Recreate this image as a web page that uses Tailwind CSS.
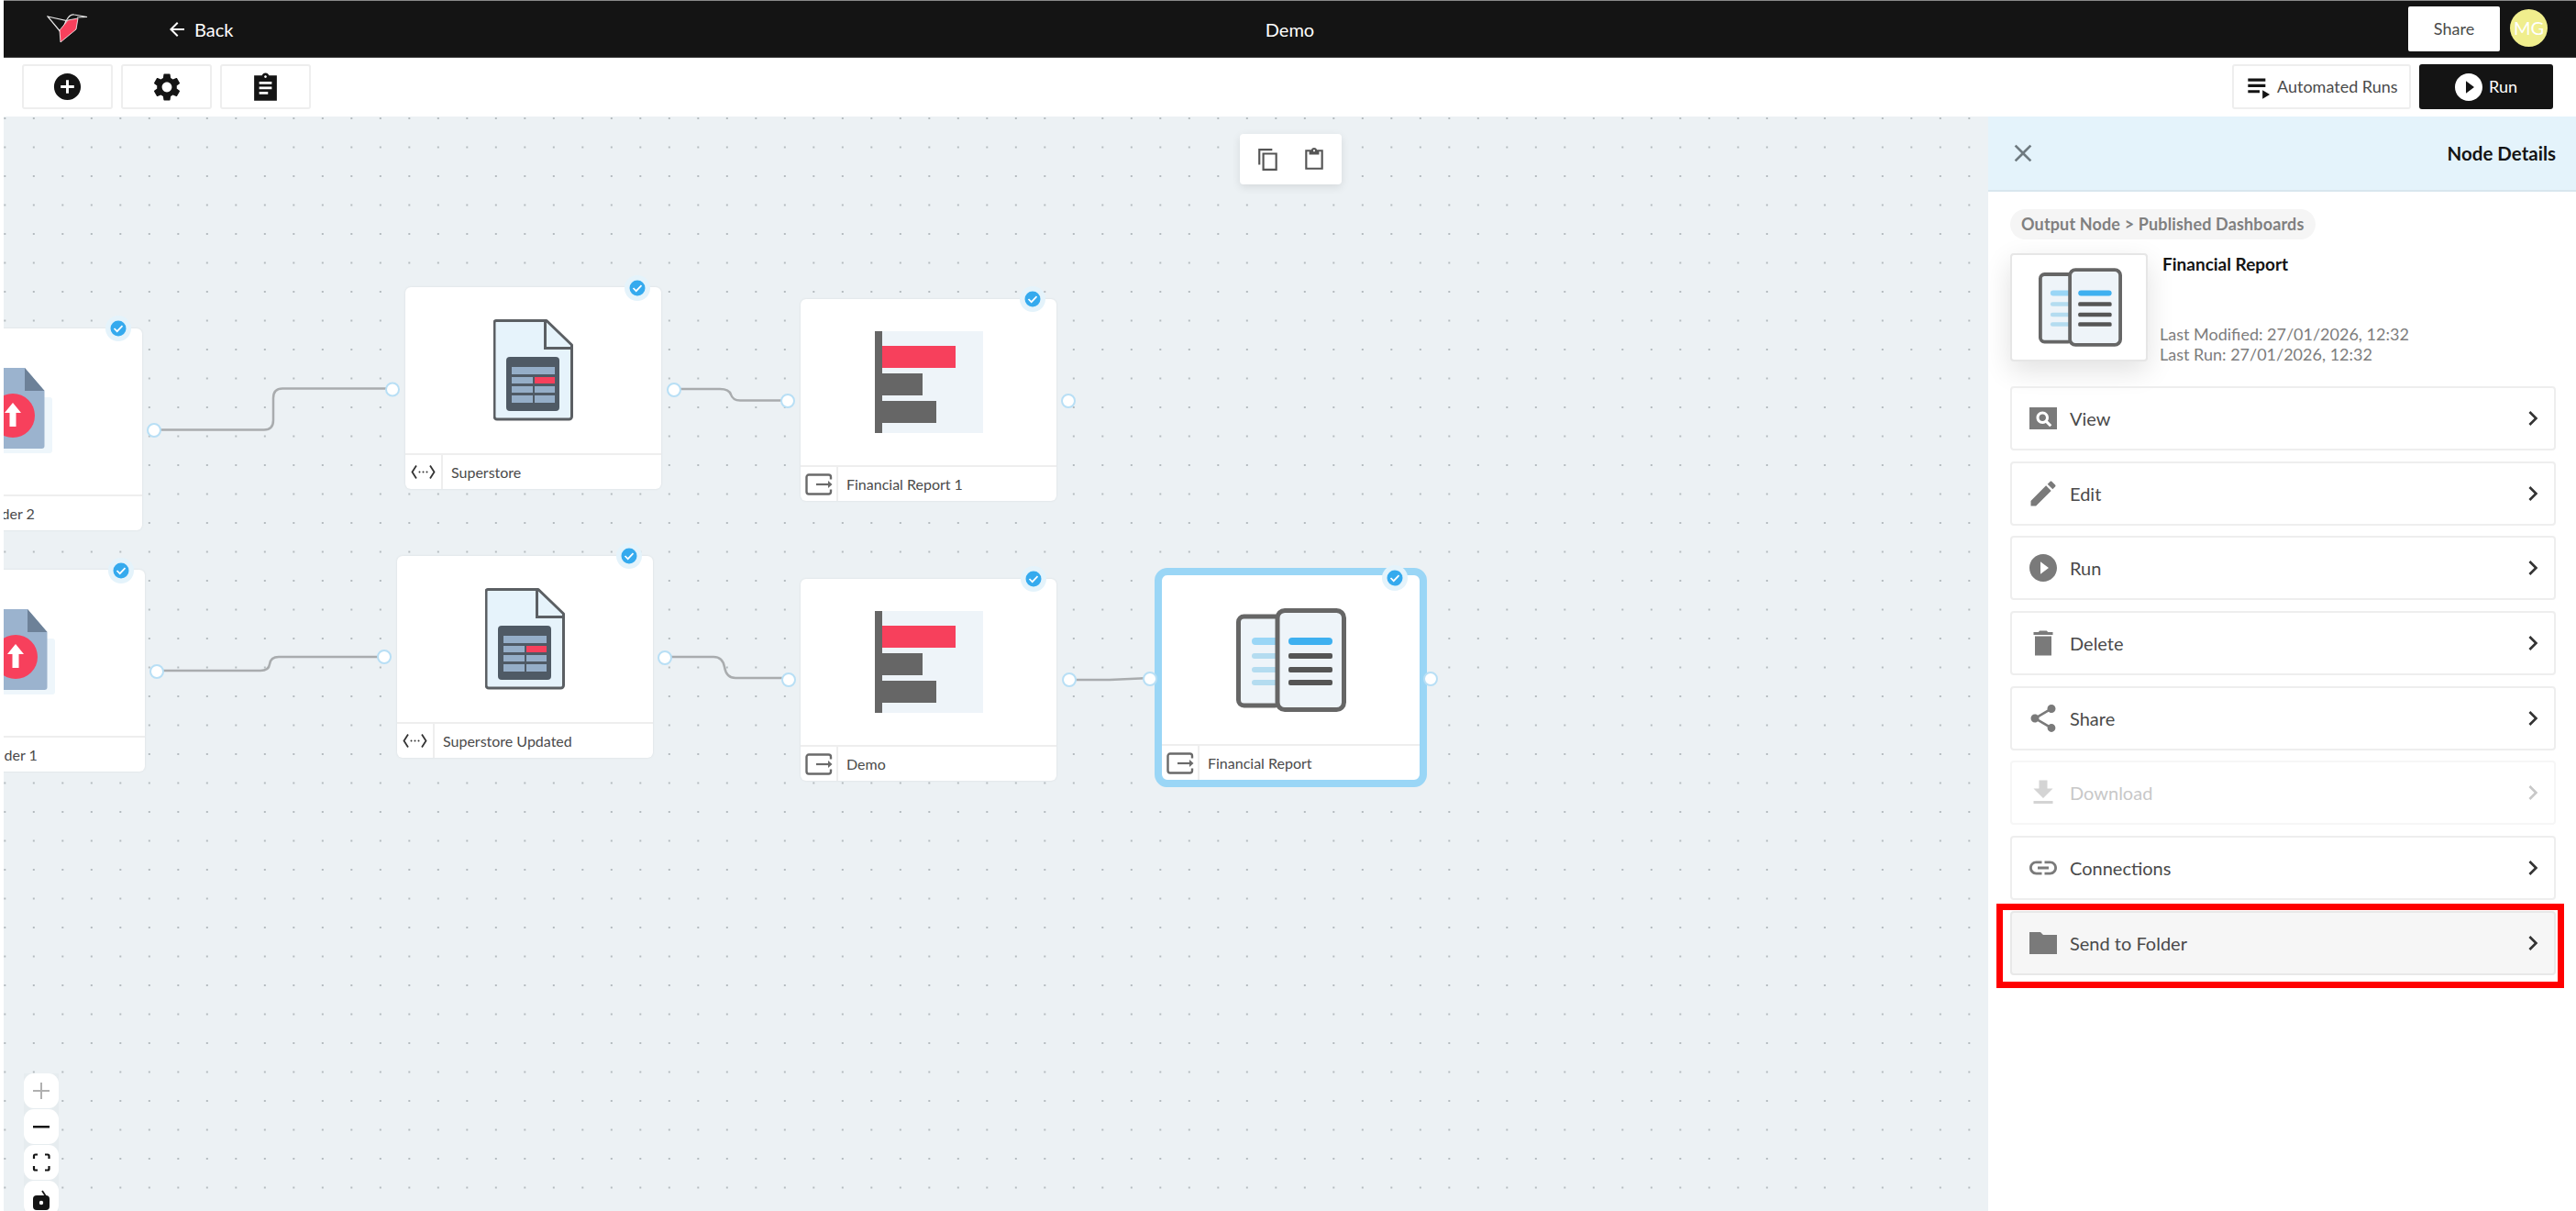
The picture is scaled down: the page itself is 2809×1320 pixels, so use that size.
<!DOCTYPE html>
<html lang="en">
<head>
<meta charset="utf-8">
<title>Demo</title>
<script src="https://cdn.jsdelivr.net/npm/@tailwindcss/browser@4"></script>
</head>
<body class="m-0 bg-white">
<svg width="0" height="0" class="absolute">
  <defs>
    <symbol id="doc" viewBox="0 0 87 111">
      <path d="M3 1.5H58L85.5 28V106a3 3 0 0 1-3 3H4a3 3 0 0 1-3-3V3.5a2 2 0 0 1 2-2z" fill="#e6f3fb" stroke="#5b5f63" stroke-width="3" stroke-linejoin="round"/>
      <path d="M56.5 2V31.5H85.5" fill="none" stroke="#5b5f63" stroke-width="3"/>
      <rect x="14" y="41" width="58" height="59" rx="4" fill="#4f5a65"/>
      <rect x="20" y="52" width="47" height="8" fill="#95aec8"/>
      <rect x="20" y="63" width="23" height="7" fill="#95aec8"/><rect x="45" y="63" width="22" height="7" fill="#f7405c"/>
      <rect x="20" y="73" width="23" height="7" fill="#95aec8"/><rect x="45" y="73" width="22" height="7" fill="#95aec8"/>
      <rect x="20" y="83" width="23" height="8" fill="#95aec8"/><rect x="45" y="83" width="22" height="8" fill="#95aec8"/>
    </symbol>
    <symbol id="bars" viewBox="0 0 118 111">
      <rect x="0" y="0" width="118" height="111" fill="#eef4f9"/>
      <rect x="0" y="0" width="8" height="112" fill="#666666"/>
      <rect x="8" y="16" width="80" height="24" fill="#f7405c"/>
      <rect x="8" y="46" width="44" height="24" fill="#666666"/>
      <rect x="8" y="76" width="59" height="24" fill="#666666"/>
    </symbol>
    <symbol id="report" viewBox="0 0 120 113">
      <rect x="2.5" y="9" width="46" height="97" rx="6" fill="#eef4f9" stroke="#666666" stroke-width="5"/>
      <rect x="17" y="32" width="30" height="8" rx="4" fill="#9ad6f6"/>
      <rect x="17" y="49" width="30" height="6" rx="3" fill="#b4dcf0"/>
      <rect x="17" y="64" width="30" height="6" rx="3" fill="#b4dcf0"/>
      <rect x="17" y="78" width="30" height="6" rx="3" fill="#b4dcf0"/>
      <rect x="45" y="2.5" width="72.5" height="108" rx="8" fill="#eef4f9" stroke="#666666" stroke-width="5"/>
      <rect x="57" y="32" width="48" height="8" rx="4" fill="#3eb0f0"/>
      <rect x="57" y="49" width="48" height="6" rx="2" fill="#555555"/>
      <rect x="57" y="64" width="48" height="6" rx="2" fill="#555555"/>
      <rect x="57" y="78" width="48" height="6" rx="2" fill="#555555"/>
    </symbol>
    <symbol id="upload" viewBox="0 0 83 93">
      <rect x="20" y="32" width="63" height="61" rx="3" fill="#eef6fb"/>
      <path d="M11 0H53L74.5 25V85a3 3 0 0 1-3 3H11a3 3 0 0 1-3-3V3a3 3 0 0 1 3-3z" fill="#9bb3ce"/>
      <path d="M53 0L74.5 25H53z" fill="#6d8198"/>
      <circle cx="40" cy="52" r="24" fill="#f7405c"/>
      <path d="M40 38L49 49H43.500V64H36.500V49H31z" fill="#ffffff"/>
    </symbol>
    <symbol id="api" viewBox="0 0 27 17">
      <path d="M6 1.500L1.500 8.500L6 15.500M21 1.500L25.500 8.500L21 15.500" fill="none" stroke="#333333" stroke-width="1.800"/>
      <circle cx="9.500" cy="8.500" r="1" fill="#333333"/><circle cx="13.500" cy="8.500" r="1" fill="#333333"/><circle cx="17.500" cy="8.500" r="1" fill="#333333"/>
    </symbol>
    <symbol id="output" viewBox="0 0 30 24">
      <path d="M28 6.500V4a2.500 2.500 0 0 0-2.500-2.500H4A2.500 2.500 0 0 0 1.500 4V20A2.500 2.500 0 0 0 4 22.500H25.500A2.500 2.500 0 0 0 28 20V17.500" fill="none" stroke="#6a6a6a" stroke-width="2.400"/>
      <path d="M12 12H26" stroke="#6a6a6a" stroke-width="2.200"/>
      <path d="M25 8L29.500 12L25 16z" fill="#6a6a6a"/>
    </symbol>
    <symbol id="badge" viewBox="-14 -14 28 28">
      <circle r="14" fill="#e4f3fb"/>
      <circle r="8.500" fill="#35aaee"/>
      <path d="M-4.500 0L-1.300 3.200L4.500 -2.800" fill="none" stroke="#ffffff" stroke-width="1.700"/>
    </symbol>
    <symbol id="chev" viewBox="0 0 24 24"><path d="M8.590 16.590L13.170 12 8.590 7.410 10 6l6 6-6 6z"/></symbol>
    <symbol id="playc" viewBox="0 0 24 24"><path d="M12 2C6.480 2 2 6.480 2 12s4.480 10 10 10 10-4.480 10-10S17.520 2 12 2zm-2 14.500v-9l6 4.500-6 4.500z"/></symbol>
  </defs>
</svg>

<div class="relative w-[2809px] h-[1320px] overflow-hidden flex flex-col font-[Lato,sans-serif] text-[#4a4a4a] bg-white">
  <!-- top bar -->
  <header class="ml-[4px] h-[63px] shrink-0 bg-[#141414] border-t border-t-[#8a8a8a] border-b border-b-[#3a3a3a] grid grid-cols-[1fr_auto_1fr] items-center text-white">
    <div class="flex items-center">
      <svg class="ml-[47px] w-[45px] h-[35px] -mt-[2px]" viewBox="51 13 45 35">
        <path d="M52 18L72 22.500L67 36L52 18z" fill="none" stroke="#e8e8e8" stroke-width="1.200"/>
        <path d="M74 22L85 20L83 32L66 46L65 33z" fill="#f7405c" stroke="#ffffff" stroke-width="0.800"/>
        <path d="M72 23C74 19 77 15 81 16L95 18.500L84 19" fill="none" stroke="#e8e8e8" stroke-width="1.200"/>
      </svg>
      <svg class="ml-[85px] w-[24px] h-[24px]" viewBox="0 0 24 24" fill="#ffffff"><path d="M20 11H7.830l5.590-5.590L12 4l-8 8 8 8 1.410-1.410L7.830 13H20v-2z"/></svg>
      <span class="ml-[7px] text-[20px] leading-6">Back</span>
    </div>
    <div class="text-[20px] leading-6">Demo</div>
    <div class="flex items-center justify-end pr-[31px] gap-[11px]">
      <button class="w-[100px] h-[49px] bg-white rounded-[2px] text-[18px] text-[#4a4a4a]">Share</button>
      <div class="w-[41px] h-[41px] rounded-full bg-[#f0ee8d] flex items-center justify-center text-[20px] text-white -mt-[3px]">MG</div>
    </div>
  </header>

  <!-- toolbar -->
  <div class="h-[64px] shrink-0 flex items-start justify-between pt-[7px] pl-[24px] pr-[25px]">
    <div class="flex gap-[9px]">
      <button class="w-[99px] h-[49px] border-2 border-[#eeeeee] rounded-[3px] flex items-center justify-center">
        <svg class="w-[35px] h-[35px]" viewBox="0 0 24 24" fill="#141414"><path d="M12 2C6.480 2 2 6.480 2 12s4.480 10 10 10 10-4.480 10-10S17.520 2 12 2zm5 11h-4v4h-2v-4H7v-2h4V7h2v4h4v2z"/></svg>
      </button>
      <button class="w-[99px] h-[49px] border-2 border-[#eeeeee] rounded-[3px] flex items-center justify-center">
        <svg class="w-[36px] h-[36px]" viewBox="0 0 24 24" fill="#141414"><path d="M19.140 12.940c.04-.3.06-.61.06-.94 0-.32-.02-.64-.07-.94l2.030-1.580c.18-.14.23-.41.12-.61l-1.920-3.320c-.12-.22-.37-.29-.59-.22l-2.390.96c-.5-.38-1.030-.7-1.620-.94l-.36-2.540c-.04-.24-.24-.41-.48-.41h-3.840c-.24 0-.43.17-.47.41l-.36 2.540c-.59.24-1.130.57-1.620.94l-2.390-.96c-.22-.08-.47 0-.59.22L2.740 8.870c-.12.21-.08.47.12.61l2.030 1.580c-.05.3-.09.63-.09.94s.02.64.07.94l-2.030 1.580c-.18.14-.23.41-.12.61l1.920 3.320c.12.22.37.29.59.22l2.390-.96c.5.38 1.030.7 1.620.94l.36 2.540c.05.24.24.41.48.41h3.840c.24 0 .44-.17.47-.41l.36-2.540c.59-.24 1.130-.56 1.620-.94l2.390.96c.22.08.47 0 .59-.22l1.920-3.320c.12-.22.07-.47-.12-.61l-2.010-1.580zM12 15.600c-1.980 0-3.600-1.620-3.600-3.600s1.620-3.600 3.600-3.600 3.600 1.620 3.600 3.600-1.620 3.600-3.600 3.600z"/></svg>
      </button>
      <button class="w-[99px] h-[49px] border-2 border-[#eeeeee] rounded-[3px] flex items-center justify-center">
        <svg class="w-[33px] h-[33px]" viewBox="0 0 24 24" fill="#141414"><path d="M21 3h-6.180C14.400 1.840 13.300 1 12 1c-1.300 0-2.400.84-2.820 2H3v20h18V3zm-9 0c.55 0 1 .45 1 1s-.45 1-1 1-1-.45-1-1 .45-1 1-1zm2 15H7v-2h7v2zm3-4H7v-2h10v2zm0-4H7V8h10v2z"/></svg>
      </button>
    </div>
    <div class="flex gap-[9px]">
      <button class="w-[195px] h-[49px] border-2 border-[#eeeeee] rounded-[3px] flex items-center pl-[9px] text-[18px]">
        <svg class="w-[38px] h-[38px]" viewBox="0 0 24 24" fill="#141414"><path d="M4 10h12v2H4zm0-4h12v2H4zm0 8h8v2H4zm10 0v6l5-3z"/></svg>
        <span class="whitespace-nowrap">Automated Runs</span>
      </button>
      <button class="w-[146px] h-[49px] bg-[#141414] rounded-[3px] flex items-center pl-[36px] text-white text-[18px]">
        <svg class="w-[36px] h-[36px] fill-white"><use href="#playc"/></svg>
        <span class="ml-[4px]">Run</span>
      </button>
    </div>
  </div>

  <div class="flex-1 flex min-h-0 pl-[4px]">
    <!-- canvas -->
    <main class="relative flex-1 overflow-hidden bg-[#ecf1f4] bg-[radial-gradient(circle,#b4bbbf_1px,transparent_1.200px)] bg-[size:31.500px_31.500px] bg-[position:-14.450px_-13.750px]">
      <!-- nodes -->
      <section class="absolute left-[-128px] top-[231px] w-[279px] h-[220px] bg-white rounded-[6px] flex flex-col shadow-[0_0_3px_rgba(0,0,0,0.08)]">
        <div class="flex-1 flex items-center justify-center"><svg class="w-[83px] h-[93px] -mt-[3px]"><use href="#upload"/></svg></div>
        <div class="h-[39px] border-t-2 border-[#eeeeee] flex items-center text-[16px]">
          <div class="w-[41px] h-full border-r-2 border-[#eeeeee]"></div><span class="ml-[9px] whitespace-nowrap">Upload Folder 2</span>
        </div>
      </section>
      <section class="absolute left-[438px] top-[186px] w-[279px] h-[220px] bg-white rounded-[6px] flex flex-col shadow-[0_0_3px_rgba(0,0,0,0.08)]">
        <div class="flex-1 flex items-center justify-center"><svg class="w-[87px] h-[111px]"><use href="#doc"/></svg></div>
        <div class="h-[39px] border-t-2 border-[#eeeeee] flex items-center text-[16px]">
          <div class="w-[41px] h-full border-r-2 border-[#eeeeee] flex items-center justify-center"><svg class="w-[27px] h-[17px]"><use href="#api"/></svg></div><span class="ml-[9px]">Superstore</span>
        </div>
      </section>
      <section class="absolute left-[869px] top-[199px] w-[279px] h-[220px] bg-white rounded-[6px] flex flex-col shadow-[0_0_3px_rgba(0,0,0,0.08)]">
        <div class="flex-1 flex items-center justify-center"><svg class="w-[118px] h-[111px]"><use href="#bars"/></svg></div>
        <div class="h-[39px] border-t-2 border-[#eeeeee] flex items-center text-[16px]">
          <div class="w-[41px] h-full border-r-2 border-[#eeeeee] flex items-center justify-center"><svg class="w-[30px] h-[24px]"><use href="#output"/></svg></div><span class="ml-[9px]">Financial Report 1</span>
        </div>
      </section>
      <section class="absolute left-[-125px] top-[494px] w-[279px] h-[220px] bg-white rounded-[6px] flex flex-col shadow-[0_0_3px_rgba(0,0,0,0.08)]">
        <div class="flex-1 flex items-center justify-center"><svg class="w-[83px] h-[93px] -mt-[3px]"><use href="#upload"/></svg></div>
        <div class="h-[39px] border-t-2 border-[#eeeeee] flex items-center text-[16px]">
          <div class="w-[41px] h-full border-r-2 border-[#eeeeee]"></div><span class="ml-[9px] whitespace-nowrap">Upload Folder 1</span>
        </div>
      </section>
      <section class="absolute left-[429px] top-[479px] w-[279px] h-[220px] bg-white rounded-[6px] flex flex-col shadow-[0_0_3px_rgba(0,0,0,0.08)]">
        <div class="flex-1 flex items-center justify-center"><svg class="w-[87px] h-[111px]"><use href="#doc"/></svg></div>
        <div class="h-[39px] border-t-2 border-[#eeeeee] flex items-center text-[16px]">
          <div class="w-[41px] h-full border-r-2 border-[#eeeeee] flex items-center justify-center"><svg class="w-[27px] h-[17px]"><use href="#api"/></svg></div><span class="ml-[9px]">Superstore Updated</span>
        </div>
      </section>
      <section class="absolute left-[869px] top-[504px] w-[279px] h-[220px] bg-white rounded-[6px] flex flex-col shadow-[0_0_3px_rgba(0,0,0,0.08)]">
        <div class="flex-1 flex items-center justify-center"><svg class="w-[118px] h-[111px]"><use href="#bars"/></svg></div>
        <div class="h-[39px] border-t-2 border-[#eeeeee] flex items-center text-[16px]">
          <div class="w-[41px] h-full border-r-2 border-[#eeeeee] flex items-center justify-center"><svg class="w-[30px] h-[24px]"><use href="#output"/></svg></div><span class="ml-[9px]">Demo</span>
        </div>
      </section>
      <section class="absolute left-[1255px] top-[492px] w-[297px] h-[239px] bg-white border-[8px] border-[#9ad6f6] rounded-[14px] flex flex-col">
        <div class="flex-1 flex items-center justify-center"><svg class="w-[120px] h-[113px]"><use href="#report"/></svg></div>
        <div class="h-[39px] border-t-2 border-[#eeeeee] flex items-center text-[16px]">
          <div class="w-[41px] h-full border-r-2 border-[#eeeeee] flex items-center justify-center"><svg class="w-[30px] h-[24px]"><use href="#output"/></svg></div><span class="ml-[9px]">Financial Report</span>
        </div>
      </section>

      <!-- connectors, ports and status badges -->
      <svg class="absolute left-0 top-0 w-[2164px] h-[1193px] pointer-events-none" viewBox="4 127 2164 1193" fill="none">
        <g stroke="#a9acae" stroke-width="2.500">
          <path d="M168 468.500H288Q298 468.500 298 458V434Q298 423.500 308 423.500H428"/>
          <path d="M735 424H785Q795 424 797 430Q799 436.500 807 436.500H859"/>
          <path d="M171 731H284Q293 731 294 724Q295 716 304 716H419"/>
          <path d="M725 716H778Q788 716 790 727Q792 739 802 739H860"/>
          <path d="M1166 741H1210L1254 739"/>
        </g>
        <g fill="#ffffff" stroke="#b8dff5" stroke-width="2">
          <circle cx="168" cy="469" r="7"/><circle cx="428" cy="424.500" r="7"/><circle cx="735" cy="425" r="7"/>
          <circle cx="859" cy="437" r="7"/><circle cx="1165" cy="437" r="7"/>
          <circle cx="171" cy="732" r="7"/><circle cx="419" cy="716" r="7"/><circle cx="725" cy="717" r="7"/>
          <circle cx="860" cy="741" r="7"/><circle cx="1166" cy="741" r="7"/>
          <circle cx="1254" cy="740" r="7"/><circle cx="1560" cy="740" r="7"/>
        </g>
        <use href="#badge" x="115" y="344" width="28" height="28"/>
        <use href="#badge" x="681" y="300" width="28" height="28"/>
        <use href="#badge" x="1112" y="312" width="28" height="28"/>
        <use href="#badge" x="118" y="608" width="28" height="28"/>
        <use href="#badge" x="672" y="592" width="28" height="28"/>
        <use href="#badge" x="1113" y="617" width="28" height="28"/>
        <use href="#badge" x="1507" y="616" width="28" height="28"/>
      </svg>

      <!-- copy/paste -->
      <div class="absolute left-[1348px] top-[19px] w-[111px] h-[55px] bg-white rounded-[4px] shadow-[0_3px_10px_rgba(0,0,0,0.1)] flex items-center justify-center gap-[24px]">
        <svg class="w-[26px] h-[26px]" viewBox="0 0 24 24" fill="#555555"><path d="M16 1H2v16h2V3h12V1zm5 4H6v18h15V5zm-2 16H8V7h11v14z"/></svg>
        <svg class="w-[26px] h-[26px]" viewBox="0 0 24 24" fill="#555555"><path d="M21 2h-6.180C14.400.84 13.300 0 12 0c-1.300 0-2.400.84-2.820 2H3v20h18V2zm-9 0c.55 0 1 .45 1 1s-.45 1-1 1-1-.45-1-1 .45-1 1-1zm7 18H5V4h2v3h10V4h2v16z"/></svg>
      </div>

      <!-- zoom controls -->
      <div class="absolute left-[22px] top-[1043px] w-[38px] flex flex-col gap-[1px] bg-[#e6ecef]">
        <button class="h-[38px] bg-white rounded-[11px] flex items-center justify-center">
          <svg class="w-[20px] h-[20px]" viewBox="0 0 20 20" fill="#b0b0b0"><path d="M9 1h2v8h8v2h-8v8H9v-8H1V9h8z"/></svg>
        </button>
        <button class="h-[38px] bg-white rounded-[11px] flex items-center justify-center">
          <svg class="w-[20px] h-[20px]" viewBox="0 0 20 20" fill="#141414"><rect x="1" y="9" width="18" height="2.500"/></svg>
        </button>
        <button class="h-[38px] bg-white rounded-[11px] flex items-center justify-center">
          <svg class="w-[20px] h-[20px]" viewBox="0 0 20 20" fill="none" stroke="#141414" stroke-width="2.200"><path d="M2 6V3a1.500 1.500 0 0 1 1.500-1.500H6M14 1.500h3A1.500 1.500 0 0 1 18.500 3V6M18.500 14v3a1.500 1.500 0 0 1-1.500 1.500H14M6 18.500H3.500A1.500 1.500 0 0 1 2 17V14"/></svg>
        </button>
        <button class="h-[38px] bg-white rounded-[11px] flex items-start justify-center pt-[9px]">
          <svg class="w-[20px] h-[24px]" viewBox="0 0 20 24"><path d="M11 2L15 8" stroke="#141414" stroke-width="1.800" fill="none"/><rect x="1" y="7" width="18" height="16" rx="4" fill="#141414"/><circle cx="10" cy="15" r="2.200" fill="#ffffff"/></svg>
        </button>
      </div>
    </main>

    <!-- details panel -->
    <aside class="w-[641px] shrink-0 bg-white flex flex-col">
      <div class="h-[82px] shrink-0 bg-[#e4f3fb] border-b-2 border-[#d8e6ee] flex items-center justify-between pl-[22px] pr-[22px]">
        <svg class="w-[32px] h-[32px]" viewBox="0 0 24 24" fill="#6f7a80"><path d="M19 6.410L17.590 5 12 10.590 6.410 5 5 6.410 10.590 12 5 17.590 6.410 19 12 13.410 17.590 19 19 17.590 13.410 12z"/></svg>
        <h2 class="text-[20.500px] font-bold text-[#141414] leading-6">Node Details</h2>
      </div>
      <div class="flex-1 pl-[24px] pr-[22px] pt-[19px]">
        <div class="w-fit h-[33px] px-[12px] rounded-full bg-[#f5f5f5] flex items-center text-[18px] tracking-[0.150px] font-bold text-[#808080]">Output Node &gt; Published Dashboards</div>
        <div class="mt-[15px] h-[118px] flex">
          <div class="w-[150px] h-[118px] shrink-0 bg-white border-2 border-[#e6e6e6] rounded-[4px] shadow-[0_10px_30px_rgba(0,0,0,0.12)] flex items-center justify-center">
            <svg class="w-[91px] h-[86px] ml-[3px]"><use href="#report"/></svg>
          </div>
          <div class="ml-[13px] text-[18px] leading-[22px] text-[#7d7d7d]">
            <div class="pl-[3px] text-[19px] leading-6 font-bold text-[#141414]">Financial Report</div>
            <div class="mt-[53px]">Last Modified: 27/01/2026, 12:32</div>
            <div>Last Run: 27/01/2026, 12:32</div>
          </div>
        </div>

        <nav class="mt-[27px] flex flex-col gap-[11.700px] text-[20px]">
          <a class="h-[70px] border-2 border-[#eeeeee] rounded-[4px] flex items-center pl-[16px] pr-[7px]">
            <svg class="w-[36px] h-[36px]" viewBox="0 0 24 24" fill="#7a7a7a"><path d="M2 4h20v16H2zm9.500 5C10.120 9 9 10.120 9 11.500S10.120 14 11.500 14 14 12.880 14 11.500 12.880 9 11.500 9zm5.290 9.210l1.420-1.420-2.910-2.900c.44-.7.7-1.510.7-2.390C16 9 14 7 11.500 7S7 9 7 11.500 9 16 11.500 16c.87 0 1.690-.26 2.380-.7l2.910 2.910z" fill-rule="evenodd"/></svg>
            <span class="ml-[11px] flex-1">View</span>
            <svg class="w-[32px] h-[32px] fill-[#333333]"><use href="#chev"/></svg>
          </a>
          <a class="h-[70px] border-2 border-[#eeeeee] rounded-[4px] flex items-center pl-[16px] pr-[7px]">
            <svg class="w-[36px] h-[36px]" viewBox="0 0 24 24" fill="#7a7a7a"><path d="M3 17.250V21h3.750L17.810 9.940l-3.750-3.750L3 17.250zM20.710 7.040c.39-.39.39-1.020 0-1.410l-2.340-2.340c-.39-.39-1.020-.39-1.410 0l-1.830 1.830 3.750 3.750 1.830-1.830z"/></svg>
            <span class="ml-[11px] flex-1">Edit</span>
            <svg class="w-[32px] h-[32px] fill-[#333333]"><use href="#chev"/></svg>
          </a>
          <a class="h-[70px] border-2 border-[#eeeeee] rounded-[4px] flex items-center pl-[16px] pr-[7px]">
            <svg class="w-[36px] h-[36px] fill-[#7a7a7a]"><use href="#playc"/></svg>
            <span class="ml-[11px] flex-1">Run</span>
            <svg class="w-[32px] h-[32px] fill-[#333333]"><use href="#chev"/></svg>
          </a>
          <a class="h-[70px] border-2 border-[#eeeeee] rounded-[4px] flex items-center pl-[16px] pr-[7px]">
            <svg class="w-[36px] h-[36px]" viewBox="0 0 24 24" fill="#7a7a7a"><path d="M6 21h12V7H6v14zM19 4h-3.500l-1-1h-5l-1 1H5v2h14V4z"/></svg>
            <span class="ml-[11px] flex-1">Delete</span>
            <svg class="w-[32px] h-[32px] fill-[#333333]"><use href="#chev"/></svg>
          </a>
          <a class="h-[70px] border-2 border-[#eeeeee] rounded-[4px] flex items-center pl-[16px] pr-[7px]">
            <svg class="w-[36px] h-[36px]" viewBox="0 0 24 24" fill="#7a7a7a"><path d="M18 16.080c-.76 0-1.440.3-1.960.77L8.910 12.700c.05-.23.09-.46.09-.7s-.04-.47-.09-.7l7.050-4.110c.54.5 1.250.81 2.040.81 1.660 0 3-1.340 3-3s-1.340-3-3-3-3 1.340-3 3c0 .24.04.47.09.7L8.040 9.810C7.500 9.310 6.790 9 6 9c-1.660 0-3 1.340-3 3s1.340 3 3 3c.79 0 1.500-.31 2.040-.81l7.120 4.160c-.05.21-.08.43-.08.65 0 1.610 1.310 2.920 2.920 2.920 1.610 0 2.920-1.310 2.920-2.920s-1.310-2.920-2.920-2.920z"/></svg>
            <span class="ml-[11px] flex-1">Share</span>
            <svg class="w-[32px] h-[32px] fill-[#333333]"><use href="#chev"/></svg>
          </a>
          <a class="h-[70px] border-2 border-[#f6f6f6] rounded-[4px] flex items-center pl-[16px] pr-[7px] text-[#c8c8c8]">
            <svg class="w-[36px] h-[36px]" viewBox="0 0 24 24" fill="#d4d4d4"><path d="M19 9h-4V3H9v6H5l7 7 7-7zM5 18v2h14v-2H5z"/></svg>
            <span class="ml-[11px] flex-1">Download</span>
            <svg class="w-[32px] h-[32px] fill-[#c8c8c8]"><use href="#chev"/></svg>
          </a>
          <a class="h-[70px] border-2 border-[#eeeeee] rounded-[4px] flex items-center pl-[16px] pr-[7px]">
            <svg class="w-[36px] h-[36px]" viewBox="0 0 24 24" fill="#7a7a7a"><path d="M3.900 12c0-1.710 1.390-3.100 3.100-3.100h4V7H7c-2.760 0-5 2.240-5 5s2.240 5 5 5h4v-1.900H7c-1.710 0-3.100-1.390-3.100-3.100zM8 13h8v-2H8v2zm9-6h-4v1.900h4c1.710 0 3.100 1.390 3.100 3.100s-1.390 3.100-3.100 3.100h-4V17h4c2.760 0 5-2.240 5-5s-2.240-5-5-5z"/></svg>
            <span class="ml-[11px] flex-1">Connections</span>
            <svg class="w-[32px] h-[32px] fill-[#333333]"><use href="#chev"/></svg>
          </a>
          <a class="relative h-[70px] border-2 border-[#e8e8e8] bg-[#f6f6f6] rounded-[4px] flex items-center pl-[16px] pr-[7px]">
            <svg class="w-[36px] h-[36px]" viewBox="0 0 24 24" fill="#7a7a7a"><path d="M10 4H2v16h20V6H12z"/></svg>
            <span class="ml-[11px] flex-1">Send to Folder</span>
            <svg class="w-[32px] h-[32px] fill-[#333333]"><use href="#chev"/></svg>
            <span class="absolute left-[-17px] right-[-11px] top-[-10px] bottom-[-16px] border-[7px] border-[#ff0000] pointer-events-none"></span>
          </a>
        </nav>
      </div>
    </aside>
  </div>
</div>
</body>
</html>
